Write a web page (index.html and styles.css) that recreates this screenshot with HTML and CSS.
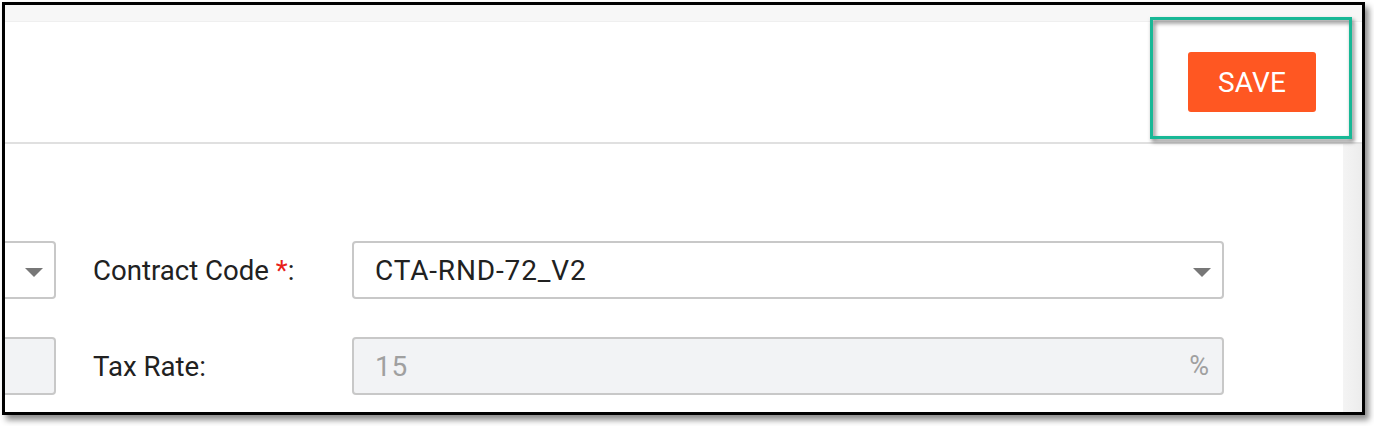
FILE: index.html
```html
<!DOCTYPE html>
<html lang="en">
<head>
<meta charset="utf-8">
<title>Contract</title>
<link rel="stylesheet" href="styles.css">
</head>
<body>
<div class="frame">
  <div class="topstrip"></div>
  <div class="header">
    <button class="save-btn">SAVE</button>
  </div>
  <div class="divider"></div>
  <div class="body">
    <div class="main">
      <div class="row">
        <div class="stub select"><span class="arrow"></span></div>
        <label class="label">Contract Code <span class="req">*</span>:</label>
        <div class="field select"><span class="value">CTA-RND-72_V2</span><span class="arrow"></span></div>
      </div>
      <div class="row">
        <div class="stub disabled"></div>
        <label class="label">Tax Rate:</label>
        <div class="field disabled"><span class="value muted">15</span><span class="unit">%</span></div>
      </div>
    </div>
    <div class="scrollbar"></div>
  </div>
  <div class="highlight"></div>
</div>
</body>
</html>
```

FILE: styles.css
```css
html, body {
  margin: 0;
  padding: 0;
  background: #ffffff;
}
body {
  width: 1374px;
  height: 426px;
  overflow: hidden;
  font-family: Roboto, "Liberation Sans", Arial, sans-serif;
}
.frame {
  position: relative;
  margin: 2px 0 0 2px;
  width: 1357px;
  height: 407px;
  border: 3px solid #000;
  display: flex;
  flex-direction: column;
  box-shadow: 4px 5px 6px rgba(0, 0, 0, 0.45);
  background: #fff;
}
.topstrip {
  height: 16px;
  background: #f7f7f7;
  border-bottom: 1px solid #efefef;
  flex: none;
}
.header {
  height: 120px;
  flex: none;
  display: flex;
  justify-content: flex-end;
  align-items: center;
  padding-right: 46px;
}
.save-btn {
  width: 128px;
  height: 60px;
  border: none;
  border-radius: 3px;
  background: #ff5722;
  color: #fff;
  font-family: Roboto, "Liberation Sans", Arial, sans-serif;
  font-size: 28px;
  font-weight: 400;
  letter-spacing: 0.2px;
  padding: 0;
  cursor: pointer;
}
.divider {
  height: 2px;
  background: #e0e0e0;
  flex: none;
}
.body {
  flex: 1;
  display: flex;
  overflow: hidden;
}
.main {
  flex: 1;
  display: flex;
  flex-direction: column;
  gap: 38px;
  padding-top: 97px;
}
.scrollbar {
  width: 19px;
  flex: none;
  background: linear-gradient(to right, #f4f4f4, #ececec);
}
.row {
  display: flex;
  align-items: center;
  height: 58px;
}
.stub {
  width: 49px;
  height: 54px;
  border: 2px solid #c8c8c8;
  border-left: none;
  border-radius: 0 4px 4px 0;
  position: relative;
  flex: none;
  box-sizing: content-box;
}
.label {
  margin-left: 37px;
  width: 259px;
  flex: none;
  font-size: 27.6px;
  color: #212121;
}
.req {
  color: #e8201a;
}
.field {
  height: 54px;
  border: 2px solid #c8c8c8;
  border-radius: 4px;
  display: flex;
  align-items: center;
  padding-left: 21px;
  box-sizing: content-box;
  position: relative;
  flex: none;
  width: 847px;
}
.value {
  font-size: 28px;
  color: #212121;
  letter-spacing: 0.85px;
}
.muted {
  color: #a0a0a0;
}
.disabled {
  background: #f2f3f5;
}
.arrow {
  position: absolute;
  right: 11px;
  top: 25px;
  width: 0;
  height: 0;
  border-left: 9px solid transparent;
  border-right: 9px solid transparent;
  border-top: 9px solid #777;
}
.unit {
  margin-left: auto;
  margin-right: 13px;
  font-size: 27px;
  color: #a0a0a0;
}
.highlight {
  position: absolute;
  left: 1145px;
  top: 12px;
  width: 196px;
  height: 116px;
  border: 3px solid #18b896;
  filter: drop-shadow(2px 3px 2px rgba(0, 0, 0, 0.55));
}
```
